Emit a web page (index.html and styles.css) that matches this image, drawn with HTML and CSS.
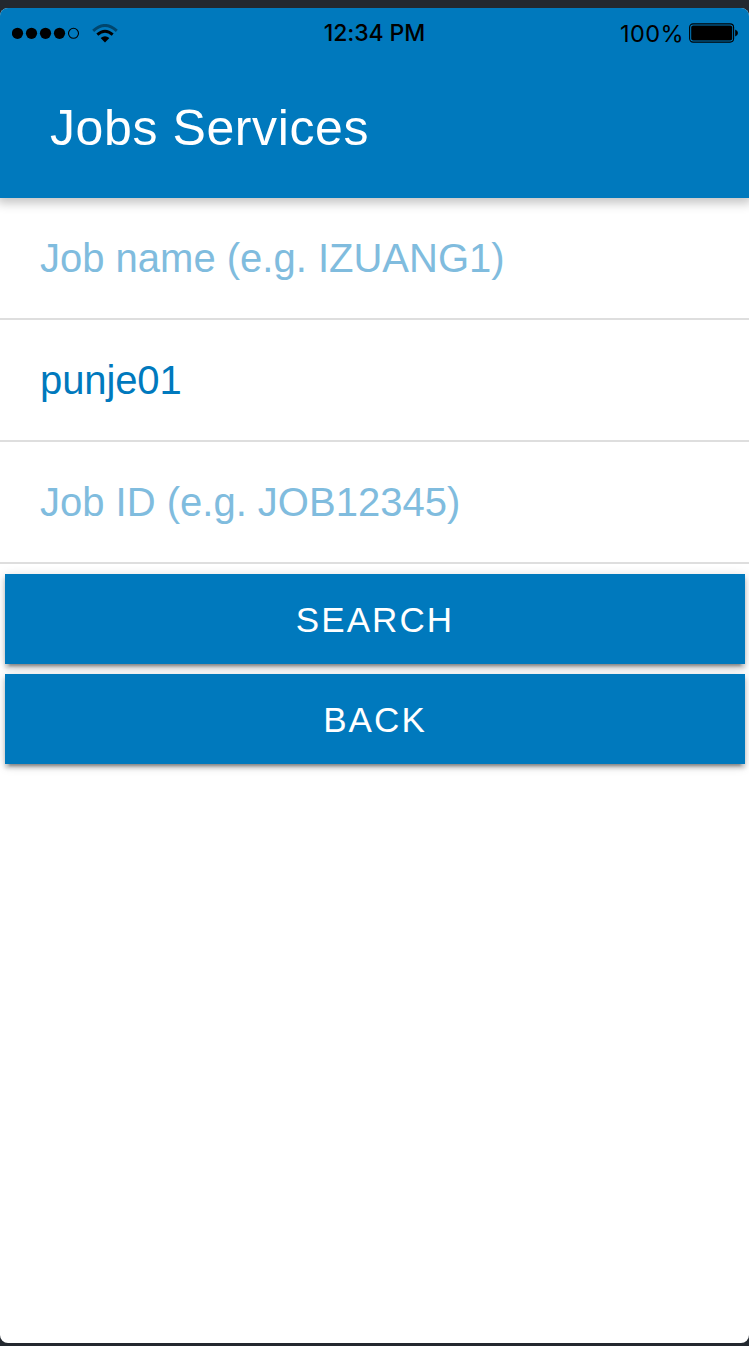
FILE: index.html
```
<!DOCTYPE html>
<html lang="en">
<head>
<meta charset="utf-8">
<title>Jobs Services</title>
<link rel="stylesheet" href="styles.css">
</head>
<body>
<div class="screen">
  <header class="header">
    <div class="status">
      <div class="status-left">
        <svg class="signal" width="68" height="12" viewBox="0 0 68 12">
          <circle cx="5.5" cy="6.3" r="5.6"/><circle cx="19.5" cy="6.3" r="5.6"/><circle cx="33.5" cy="6.3" r="5.6"/><circle cx="47.5" cy="6.3" r="5.6"/>
          <circle cx="61.5" cy="6.3" r="5" fill="none" stroke="#000" stroke-width="1.1"/>
        </svg>
        <svg class="wifi" width="26" height="19" viewBox="0 0 26 19">
          <path d="M1.2 6.8Q13 -3.8 24.8 6.8" fill="none" stroke="#000" stroke-opacity=".42" stroke-width="3"/>
          <path d="M5.3 10.7Q13 3.9 20.7 10.7" fill="none" stroke="#000" stroke-width="2.9"/>
          <path d="M8.6 14.1Q13 10.3 17.4 14.1L13 18.4Z"/>
        </svg>
      </div>
      <div class="clock">12:34 PM</div>
      <div class="status-right">
        <span class="percent">100%</span>
        <svg class="battery" width="50" height="20" viewBox="0 0 50 20">
          <rect x=".6" y=".9" width="44" height="18.2" rx="3.5" fill="none" stroke="#000" stroke-width="1.1"/>
          <rect x="2.2" y="2.5" width="41" height="15" rx="2"/>
          <path d="M46.2 6.5Q49 7.7 49 10T46.2 13.5Z"/>
        </svg>
      </div>
    </div>
    <h1 class="title">Jobs Services</h1>
  </header>
  <main>
    <input class="field" placeholder="Job name (e.g. IZUANG1)">
    <input class="field field-owner" value="punje01">
    <input class="field" placeholder="Job ID (e.g. JOB12345)">
    <div class="actions">
      <button class="button">SEARCH</button>
      <button class="button">BACK</button>
    </div>
  </main>
</div>
</body>
</html>
```
FILE: styles.css
```
* { box-sizing: border-box; }
body {
  margin: 0;
  padding: 8px 0 3px;
  height: 1346px;
  background: #23282f;
  font-family: "Liberation Sans", Arial, sans-serif;
}
.screen {
  height: 1335px;
  background: #fff;
  border-radius: 8px;
  overflow: hidden;
}
.header {
  height: 190px;
  background: #0079bd;
  box-shadow: 0 2px 10px 3px rgba(0, 0, 0, .24);
}
.status {
  display: grid;
  grid-template-columns: 1fr auto 1fr;
  align-items: center;
  height: 50px;
  padding: 0 10px 0 12px;
  color: #000;
  font-family: Inter, sans-serif;
}
.status-left, .status-right { display: flex; align-items: center; }
.status-right { justify-content: flex-end; gap: 5px; }
.signal { margin-right: 12px; }
.clock { margin-right: 2px; font-size: 23px; font-weight: 500; letter-spacing: -.1px; }
.percent { font-size: 23.5px; letter-spacing: .4px; }
.title {
  margin: 0;
  padding: 40px 50px 0;
  color: #fff;
  font-size: 50px;
  font-weight: 400;
  line-height: 60px;
  letter-spacing: .6px;
}
.field {
  display: block;
  width: 100%;
  height: 122px;
  margin: 0;
  padding: 0 40px;
  border: 0;
  border-bottom: 2px solid #dedede;
  border-radius: 0;
  outline: 0;
  background: transparent;
  color: #0079bd;
  font: 40px "Liberation Sans", Arial, sans-serif;
}
.field::placeholder { color: #80bcde; opacity: 1; }
.field-owner { letter-spacing: -.1px; }
.actions {
  display: flex;
  flex-direction: column;
  gap: 10px;
  padding: 10px 4px 0 5px;
}
.button {
  height: 90px;
  padding: 2px 0 0;
  border: 0;
  background: #0079bd;
  color: #fff;
  font: 35px "Liberation Sans", Arial, sans-serif;
  letter-spacing: 2.1px;
  box-shadow: 0 6px 2px -4px rgba(0, 0, 0, .24), 0 4px 4px rgba(0, 0, 0, .2), 0 2px 10px rgba(0, 0, 0, .16);
}
```
